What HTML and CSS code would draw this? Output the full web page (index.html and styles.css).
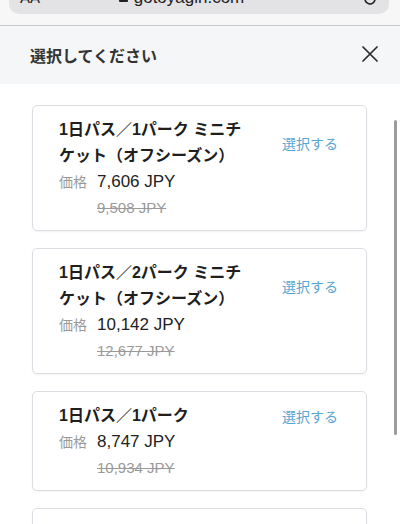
FILE: index.html
```html
<!DOCTYPE html>
<html lang="ja">
<head>
    <meta charset="UTF-8">
    <meta name="viewport" content="width=device-width, initial-scale=1.0">
    <title>選択してください</title>
    <link rel="stylesheet" href="styles.css">
</head>
<body>
    <!-- ブラウザのアドレスバー -->
    <div class="browser-bar">
        <div class="url-bar">
            <span class="aa">AA</span>
            <span class="domain"><span class="lock"></span>gotoyagin.com</span>
            <svg class="reload" width="14" height="14" viewBox="0 0 14 14">
                <path d="M12 7a5 5 0 1 1-1.5-3.6" fill="none" stroke="#222" stroke-width="1.6"/>
            </svg>
        </div>
    </div>

    <div class="sheet-head">
        <h1>選択してください</h1>
        <svg class="close" width="16" height="16" viewBox="0 0 16 16">
            <path d="M1 1L15 15M15 1L1 15" stroke="#2b2b2b" stroke-width="1.7" stroke-linecap="round"/>
        </svg>
    </div>

    <div class="list">
        <div class="card">
            <div class="card-head">
                <div class="card-title">1日パス／1パーク ミニチケット（オフシーズン）</div>
                <span class="select">選択する</span>
            </div>
            <div class="price-row">
                <span class="label">価格</span>
                <span class="price">7,606 JPY</span>
            </div>
            <div class="old-price">9,508 JPY</div>
        </div>

        <div class="card">
            <div class="card-head">
                <div class="card-title">1日パス／2パーク ミニチケット（オフシーズン）</div>
                <span class="select">選択する</span>
            </div>
            <div class="price-row">
                <span class="label">価格</span>
                <span class="price">10,142 JPY</span>
            </div>
            <div class="old-price">12,677 JPY</div>
        </div>

        <div class="card">
            <div class="card-head">
                <div class="card-title">1日パス／1パーク</div>
                <span class="select">選択する</span>
            </div>
            <div class="price-row">
                <span class="label">価格</span>
                <span class="price">8,747 JPY</span>
            </div>
            <div class="old-price">10,934 JPY</div>
        </div>

        <!-- 4枚目は画面下で切れている -->
        <div class="card card-cut"></div>
    </div>

    <div class="scrollbar"></div>
</body>
</html>
```

FILE: styles.css
```css
body {
    margin: 0;
    height: 524px;
    overflow: hidden;
    position: relative;
    background: #fff;
    color: #1f1f1f;
    font-family: "Liberation Sans", "Noto Sans CJK JP", sans-serif;
}
.browser-bar {
    height: 25px;
    background: #f7f7f7;
    border-bottom: 1px solid #c9c9cd;
    overflow: hidden;
}
.url-bar {
    margin: -22px 11px 0 9px;
    height: 36px;
    padding: 0 12px 6px 11px;
    box-sizing: border-box;
    background: #e3e3e5;
    border-radius: 10px;
    display: flex;
    align-items: flex-end;
    justify-content: space-between;
    font-size: 17px;
    line-height: 20px;
    color: #222;
}
.aa {
    font-size: 15px;
}
.domain {
    display: flex;
    align-items: flex-end;
    gap: 6px;
    margin-right: 40px;
}
.lock {
    width: 9px;
    height: 8px;
    background: #222;
    border-radius: 1px;
    margin-bottom: 6px;
}
.reload {
    margin-bottom: 2px;
}
.sheet-head {
    height: 58px;
    background: #f5f6f8;
    display: flex;
    align-items: center;
    justify-content: space-between;
    padding: 0 22px 0 30px;
}
.sheet-head h1 {
    margin: 0;
    font-size: 16px;
    font-weight: bold;
    color: #333;
}
.close {
    margin-top: -3px;
}
.list {
    padding-top: 21px;
}
.card {
    margin: 0 33px 17px 32px;
    padding: 11px 28px 10px 26px;
    border: 1px solid #dcdde2;
    border-radius: 5px;
    box-shadow: 0 1px 2px rgba(0, 0, 0, 0.05);
}
.card-cut {
    height: 80px;
}
.card-head {
    display: flex;
    align-items: center;
    justify-content: space-between;
}
.card-title {
    width: 190px;
    font-size: 16px;
    font-weight: bold;
    line-height: 26px;
}
.select {
    font-size: 14px;
    color: #56a6d3;
}
.price-row {
    display: flex;
    align-items: baseline;
    gap: 10px;
    line-height: 25px;
}
.label {
    font-size: 14px;
    color: #9a9a9a;
}
.price {
    font-size: 17px;
    color: #222;
}
.old-price {
    margin-left: 38px;
    font-size: 15px;
    line-height: 25px;
    color: #9a9a9a;
    text-decoration: line-through;
}
.scrollbar {
    position: absolute;
    right: 3px;
    top: 120px;
    width: 3px;
    height: 315px;
    background: #9c9c9c;
    border-radius: 2px;
}
```
